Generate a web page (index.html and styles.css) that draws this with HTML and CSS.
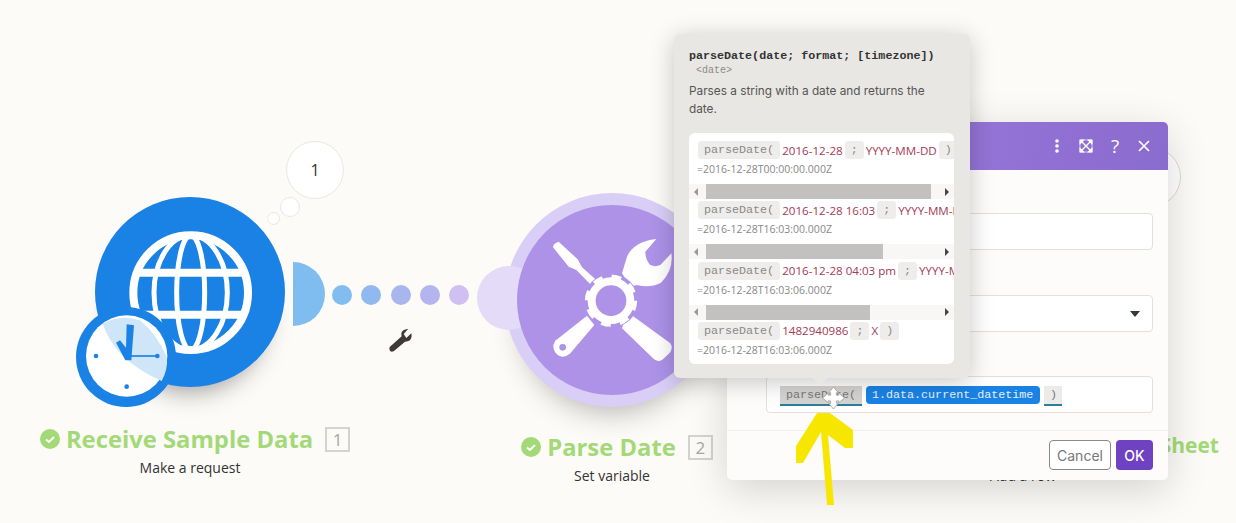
FILE: index.html
```html
<!DOCTYPE html>
<html>
<head>
  <title>Parse Date</title>
  <meta charset="utf-8">
  <link rel="stylesheet" href="styles.css">
</head>
<body>

<div class="canvas">

  <!-- first module -->
  <div class="bubble bubble-big">1</div>
  <div class="bubble bubble-mid"></div>
  <div class="bubble bubble-small"></div>

  <div class="node node-one">
    <div class="halfmoon"></div>
    <div class="disc disc-blue">
      <svg class="disc-icon" viewBox="105 200 570 570">
        <g fill="none" stroke="#fff" stroke-width="24">
          <circle cx="392" cy="487" r="172"/>
          <ellipse cx="392" cy="487" rx="42" ry="172" stroke-width="15"/>
          <ellipse cx="392" cy="487" rx="110" ry="172" stroke-width="15"/>
          <path d="M235 427H550M235 553H550" stroke-width="24"/>
        </g>
      </svg>
    </div>
    <div class="clock">
      <svg viewBox="48 530 300 300">
        <circle cx="198" cy="680" r="150" fill="#1a82e5"/>
        <circle cx="200" cy="677" r="122" fill="#fff"/>
        <path d="M128 580Q165 690 305 752Q325 715 320 680Q290 610 240 570Q180 550 128 580Z" fill="#cfe5f8"/>
        <path d="M196 690L168 637L180 630L198 652L200 582L222 585L214 690Z" fill="#1a82e5"/>
        <path d="M205 677H292" stroke="#1a82e5" stroke-width="5"/>
        <circle cx="108" cy="677" r="7" fill="#1a82e5"/>
        <circle cx="292" cy="677" r="7" fill="#1a82e5"/>
        <circle cx="200" cy="769" r="7" fill="#1a82e5"/>
      </svg>
    </div>
    <div class="node-label">
      <div class="title-row">
        <svg class="check" viewBox="0 0 20 20"><circle cx="10" cy="10" r="10" fill="#a3d977"/><path d="M6 10.5L9 13L14 8" fill="none" stroke="#fff" stroke-width="2"/></svg>
        <span class="node-title">Receive Sample Data</span>
        <span class="node-num">1</span>
      </div>
      <div class="node-sub">Make a request</div>
    </div>
  </div>

  <!-- route between the modules -->
  <div class="route">
    <span class="route-dot"></span>
    <span class="route-dot"></span>
    <span class="route-dot"></span>
    <span class="route-dot"></span>
    <span class="route-dot"></span>
  </div>
  <svg class="route-wrench" viewBox="985 595 75 75">
    <path d="M990 652L1026 620Q1020 600 1046 597L1032 613L1040 625L1055 611Q1060 636 1036 636L1002 665Q986 670 990 652Z" fill="#3d3a38"/>
  </svg>

  <!-- second module -->
  <div class="node node-two">
    <div class="ring"></div>
    <div class="bump"></div>
    <div class="disc disc-purple">
      <svg class="disc-icon" viewBox="140 105 570 570">
        <g fill="#fff">
          <path d="M248 232Q248 224 255 220L265 215L322 268L335 292L378 330L362 345L318 300L295 290Z"/>
          <path d="M350 437L372 465L300 550Q280 568 262 555Q240 535 255 512Z"/>
          <path d="M470 425L600 520Q610 535 597 550L575 570Q560 578 548 565L455 475Z"/>
          <path d="M455 310L470 260Q490 215 558 207L525 245Q525 270 540 285Q555 292 570 285L603 250Q610 300 572 338Q540 355 500 345L480 350Z"/>
        </g>
        <circle cx="277" cy="532" r="10" fill="#ad92e8"/>
        <circle cx="422" cy="392" r="81" fill="#ad92e8"/>
        <circle cx="422" cy="392" r="58" fill="none" stroke="#fff" stroke-width="24"/>
        <circle cx="422" cy="392" r="72" fill="none" stroke="#fff" stroke-width="13" stroke-dasharray="29 27.5"/>
      </svg>
    </div>
    <div class="node-label">
      <div class="title-row">
        <svg class="check" viewBox="0 0 20 20"><circle cx="10" cy="10" r="10" fill="#a3d977"/><path d="M6 10.5L9 13L14 8" fill="none" stroke="#fff" stroke-width="2"/></svg>
        <span class="node-title">Parse Date</span>
        <span class="node-num">2</span>
      </div>
      <div class="node-sub">Set variable</div>
    </div>
  </div>

  <!-- third module, mostly under the dialog -->
  <div class="bubble bubble-third"></div>
  <div class="third-title">Sheet</div>
  <div class="third-sub">Add a row</div>

  <!-- settings dialog -->
  <div class="dialog">
    <div class="dialog-head">
      <svg class="head-icon" viewBox="0 0 16 16"><circle cx="8" cy="3" r="1.8"/><circle cx="8" cy="8" r="1.8"/><circle cx="8" cy="13" r="1.8"/></svg>
      <svg class="head-icon" viewBox="0 0 16 16"><path d="M2 2H14V14H2Z" fill="none" stroke="#fff" stroke-width="1" stroke-opacity="0.6"/><path d="M3 3L13 13M13 3L3 13" stroke="#fff" stroke-width="1.4"/><path d="M1.500 1.500H7L1.500 7ZM14.500 1.500H9L14.500 7ZM1.500 14.500H7L1.500 9ZM14.500 14.500H9L14.500 9Z"/></svg>
      <span class="head-help">?</span>
      <svg class="head-icon" viewBox="0 0 16 16"><path d="M3 3L13 13M13 3L3 13" stroke="#fff" stroke-width="1.7"/></svg>
    </div>
    <div class="dialog-body">
      <div class="field"></div>
      <div class="field"><span class="caret"></span></div>
      <div class="field field-editor">
        <span class="tag tag-fn">parseDate(</span>
        <span class="tag tag-var">1.data.current_datetime</span>
        <span class="tag tag-close">)</span>
      </div>
    </div>
    <div class="dialog-foot">
      <button class="btn btn-cancel">Cancel</button>
      <button class="btn btn-ok">OK</button>
    </div>
  </div>

  <!-- function help popup -->
  <div class="popup">
    <div class="popup-sig">parseDate(date; format; [timezone])</div>
    <div class="popup-type">&lt;date&gt;</div>
    <p class="popup-desc">Parses a string with a date and returns the date.</p>
    <div class="examples">
      <div class="example">
        <div class="code-row">
          <span class="chip">parseDate(</span><span class="val">2016-12-28</span><span class="chip">;</span><span class="val">YYYY-MM-DD</span><span class="chip">)</span>
        </div>
        <div class="result">=2016-12-28T00:00:00.000Z</div>
        <div class="scroll"><span class="arrow-left"></span><span class="thumb thumb-a"></span><span class="arrow-right"></span></div>
      </div>
      <div class="example">
        <div class="code-row">
          <span class="chip">parseDate(</span><span class="val">2016-12-28 16:03</span><span class="chip">;</span><span class="val">YYYY-MM-DD HH:mm</span><span class="chip">)</span>
        </div>
        <div class="result">=2016-12-28T16:03:00.000Z</div>
        <div class="scroll"><span class="arrow-left"></span><span class="thumb thumb-b"></span><span class="arrow-right"></span></div>
      </div>
      <div class="example">
        <div class="code-row">
          <span class="chip">parseDate(</span><span class="val">2016-12-28 04:03 pm</span><span class="chip">;</span><span class="val">YYYY-MM-DD hh:mm a</span><span class="chip">)</span>
        </div>
        <div class="result">=2016-12-28T16:03:06.000Z</div>
        <div class="scroll"><span class="arrow-left"></span><span class="thumb thumb-c"></span><span class="arrow-right"></span></div>
      </div>
      <div class="example">
        <div class="code-row">
          <span class="chip">parseDate(</span><span class="val">1482940986</span><span class="chip">;</span><span class="val">X</span><span class="chip">)</span>
        </div>
        <div class="result">=2016-12-28T16:03:06.000Z</div>
      </div>
    </div>
    <span class="popup-tip"></span>
  </div>

  <!-- cursor and hand drawn arrow on top -->
  <svg class="move-cursor" viewBox="0 0 24 24">
    <path d="M12 0.5L17 6.5H15V9H17.5V7L23.5 12L17.5 17V15H15V17.5H17L12 23.5L7 17.5H9V15H6.5V17L0.5 12L6.5 7V9H9V6.5H7Z" fill="#fff" stroke="#aaa" stroke-width="1"/>
  </svg>
  <svg class="yellow-arrow" viewBox="790 405 70 105">
    <path d="M817 413H830L853 430V448H845L828 435L834 505H827L821 432L803 463H796V446Z" fill="#f7e600"/>
  </svg>

</div>

</body>
</html>
```
FILE: styles.css
```css
* {
  box-sizing: border-box;
}

html, body {
  margin: 0;
  padding: 0;
}

body {
  font-family: "Open Sans", "Liberation Sans", sans-serif;
}

.canvas {
  position: relative;
  width: 1236px;
  height: 523px;
  overflow: hidden;
  background-color: #fdfbf8;
}

/* Thought bubbles */
.bubble {
  position: absolute;
  border: 1px solid #ece6e2;
  border-radius: 50%;
  background-color: #fff;
}

.bubble-big {
  left: 286px;
  top: 141px;
  width: 58px;
  height: 58px;
  display: flex;
  align-items: center;
  justify-content: center;
  font-size: 16px;
  color: #333;
}

.bubble-mid {
  left: 280px;
  top: 197px;
  width: 20px;
  height: 20px;
}

.bubble-small {
  left: 267px;
  top: 212px;
  width: 13px;
  height: 13px;
}

.bubble-third {
  left: 1121px;
  top: 147px;
  width: 60px;
  height: 60px;
  border-color: #dcd9d5;
}

/* Modules */
.node {
  position: absolute;
  width: 190px;
  height: 190px;
}

.node-one {
  left: 95px;
  top: 197px;
}

.node-two {
  left: 517px;
  top: 205px;
}

.disc {
  position: absolute;
  inset: 0;
  border-radius: 50%;
}

.disc-blue {
  background-color: #1a82e5;
  box-shadow: 0 24px 26px -20px rgba(0, 0, 0, 0.4);
}

.disc-purple {
  background-color: #ad92e8;
}

.disc-icon {
  display: block;
  width: 190px;
  height: 190px;
}

.halfmoon {
  position: absolute;
  left: 198px;
  top: 65px;
  width: 32px;
  height: 64px;
  border-radius: 0 32px 32px 0;
  background-color: #7fbcf0;
}

.clock {
  position: absolute;
  left: -19px;
  top: 110px;
  width: 100px;
  height: 100px;
}

.clock svg {
  display: block;
  width: 100px;
  height: 100px;
}

.ring {
  position: absolute;
  inset: -12px;
  border-radius: 50%;
  background-color: #d9cef5;
  box-shadow: 0 22px 30px -18px rgba(0, 0, 0, 0.3);
}

.bump {
  position: absolute;
  left: -40px;
  top: 61px;
  width: 64px;
  height: 64px;
  border-radius: 50%;
  background-color: #e3dbf7;
}

.node-label {
  position: absolute;
  left: -105px;
  top: 229px;
  width: 400px;
  display: flex;
  flex-direction: column;
  align-items: center;
}

.title-row {
  display: flex;
  align-items: center;
  margin-left: 10px;
  height: 26px;
}

.check {
  width: 20px;
  height: 20px;
  margin-right: 6px;
}

.node-title {
  font-size: 23.8px;
  font-weight: 700;
  color: #a3d977;
  white-space: nowrap;
}

.node-num {
  width: 25px;
  height: 25px;
  margin-left: 12px;
  border: 2px solid #d5d3d0;
  display: flex;
  align-items: center;
  justify-content: center;
  font-size: 17px;
  color: #a8a6a4;
}

.node-sub {
  margin-top: 6px;
  font-size: 14px;
  color: #333;
}

.third-title {
  position: absolute;
  right: 17px;
  top: 431px;
  font-size: 21px;
  font-weight: 700;
  color: #a3d977;
}

.third-sub {
  position: absolute;
  left: 990px;
  top: 466px;
  font-size: 14px;
  color: #333;
}

/* Route dots */
.route {
  position: absolute;
  left: 332px;
  top: 285px;
  display: flex;
  gap: 9.3px;
}

.route-dot {
  width: 20px;
  height: 20px;
  border-radius: 50%;
  background-color: #82bdf2;
}

.route-dot:nth-child(2) {
  background-color: #8fb9ef;
}

.route-dot:nth-child(3) {
  background-color: #a8b6ee;
}

.route-dot:nth-child(4) {
  background-color: #b4b4ef;
}

.route-dot:nth-child(5) {
  background-color: #cfc0f1;
}

.route-wrench {
  position: absolute;
  left: 388px;
  top: 328px;
  width: 25px;
  height: 25px;
}

/* Dialog */
.dialog {
  position: absolute;
  left: 727px;
  top: 122px;
  width: 441px;
  height: 358px;
  border-radius: 5px;
  background-color: #fdfcfa;
  box-shadow: 0 10px 40px rgba(0, 0, 0, 0.16);
  display: flex;
  flex-direction: column;
}

.dialog-head {
  height: 48px;
  flex-shrink: 0;
  padding-right: 16px;
  border-radius: 5px 5px 0 0;
  background: linear-gradient(100deg, #a07fdf, #8a6bce);
  display: flex;
  align-items: center;
  justify-content: flex-end;
  gap: 13px;
}

.head-icon {
  width: 16px;
  height: 16px;
  fill: #fff;
}

.head-help {
  width: 16px;
  text-align: center;
  font-size: 19px;
  font-weight: 500;
  color: #fff;
}

.dialog-body {
  flex: 1;
  padding: 43px 15px 0 39px;
  display: flex;
  flex-direction: column;
  gap: 45px;
}

.field {
  position: relative;
  height: 37px;
  flex-shrink: 0;
  border: 1px solid #e4dfdc;
  border-radius: 4px;
  background-color: #fff;
}

.caret {
  position: absolute;
  right: 12px;
  top: 15px;
  width: 0;
  height: 0;
  border-left: 5px solid transparent;
  border-right: 5px solid transparent;
  border-top: 6px solid #2f3a3a;
}

.field-editor {
  margin-top: -1px;
  padding-left: 13px;
  display: flex;
  align-items: flex-start;
  gap: 4px;
}

.tag {
  height: 20px;
  margin-top: 9px;
  padding: 0 6px;
  font-family: "Liberation Mono", monospace;
  font-size: 11.7px;
  line-height: 19px;
  white-space: nowrap;
}

.tag-fn {
  width: 82px;
  background-color: #d4d3d1;
  border-bottom: 2px solid #2c7f9a;
  color: #777;
}

.tag-var {
  width: 174px;
  height: 18px;
  border-radius: 4px;
  background-color: #1a82e5;
  color: #e6f2fc;
}

.tag-close {
  width: 18px;
  background-color: #ecebe9;
  border-bottom: 2px solid #2c7f9a;
  color: #777;
}

.dialog-foot {
  height: 50px;
  flex-shrink: 0;
  padding-right: 15px;
  border-top: 1px solid #f3f0ed;
  display: flex;
  align-items: flex-start;
  justify-content: flex-end;
  gap: 5px;
}

.btn {
  height: 30px;
  margin-top: 9px;
  border-radius: 4px;
  font-family: "Inter", sans-serif;
  font-size: 14px;
}

.btn-cancel {
  width: 62px;
  padding: 0;
  border: 1px solid #8a8a8a;
  background-color: #fff;
  color: #777;
}

.btn-ok {
  width: 37px;
  padding: 0;
  border: none;
  background-color: #6f42c1;
  color: #fff;
  font-weight: 500;
}

/* Help popup */
.popup {
  position: absolute;
  left: 674px;
  top: 34px;
  width: 296px;
  height: 344px;
  padding: 14px 16px 0 15px;
  border-radius: 6px;
  background-color: #e9e7e4;
  box-shadow: 0 4px 24px rgba(0, 0, 0, 0.22);
}

.popup-sig {
  font-family: "Liberation Mono", monospace;
  font-size: 11.7px;
  font-weight: 700;
  line-height: 16px;
  color: #333;
  white-space: nowrap;
}

.popup-type {
  margin-left: 7px;
  font-family: "Liberation Mono", monospace;
  font-size: 10px;
  line-height: 14px;
  color: #8c8a88;
}

.popup-desc {
  margin: 4px 0 0;
  font-family: "Inter", sans-serif;
  font-size: 11.8px;
  line-height: 18px;
  color: #555;
}

.examples {
  margin-top: 15px;
  height: 231px;
  padding-top: 8px;
  border-radius: 6px;
  background-color: #fff;
  overflow: hidden;
}

.example {
  height: 60.3px;
}

.code-row {
  padding-left: 9px;
  display: flex;
  align-items: center;
  gap: 2px;
  height: 18px;
  overflow: hidden;
}

.chip {
  height: 18px;
  flex-shrink: 0;
  padding: 0 6px;
  border-radius: 3px;
  background-color: #eeedeb;
  font-family: "Liberation Mono", monospace;
  font-size: 11.7px;
  line-height: 19px;
  color: #888;
}

.val {
  flex-shrink: 0;
  font-size: 11.6px;
  color: #a33a55;
  white-space: nowrap;
}

.result {
  margin-top: 2px;
  padding-left: 8px;
  font-size: 10.5px;
  line-height: 16px;
  color: #888;
  white-space: nowrap;
}

.scroll {
  height: 15px;
  margin-top: 7px;
  padding: 0 5px;
  background-color: #f8f7f6;
  display: flex;
  align-items: center;
}

.arrow-left,
.arrow-right {
  width: 0;
  height: 0;
  border-top: 4px solid transparent;
  border-bottom: 4px solid transparent;
}

.arrow-left {
  border-right: 4px solid #999;
}

.arrow-right {
  margin-left: auto;
  border-left: 4px solid #444;
}

.thumb {
  height: 15px;
  margin-left: 8px;
  background-color: #c2c1c0;
}

.thumb-a {
  width: 225px;
}

.thumb-b {
  width: 177px;
}

.thumb-c {
  width: 164px;
}

.popup-tip {
  position: absolute;
  left: 139px;
  top: 100%;
  width: 0;
  height: 0;
  border-left: 7px solid transparent;
  border-right: 7px solid transparent;
  border-top: 7px solid #e9e7e4;
}

/* Overlays */
.move-cursor {
  position: absolute;
  left: 822px;
  top: 386px;
  width: 23px;
  height: 24px;
}

.yellow-arrow {
  position: absolute;
  left: 790px;
  top: 405px;
  width: 70px;
  height: 105px;
}
```
